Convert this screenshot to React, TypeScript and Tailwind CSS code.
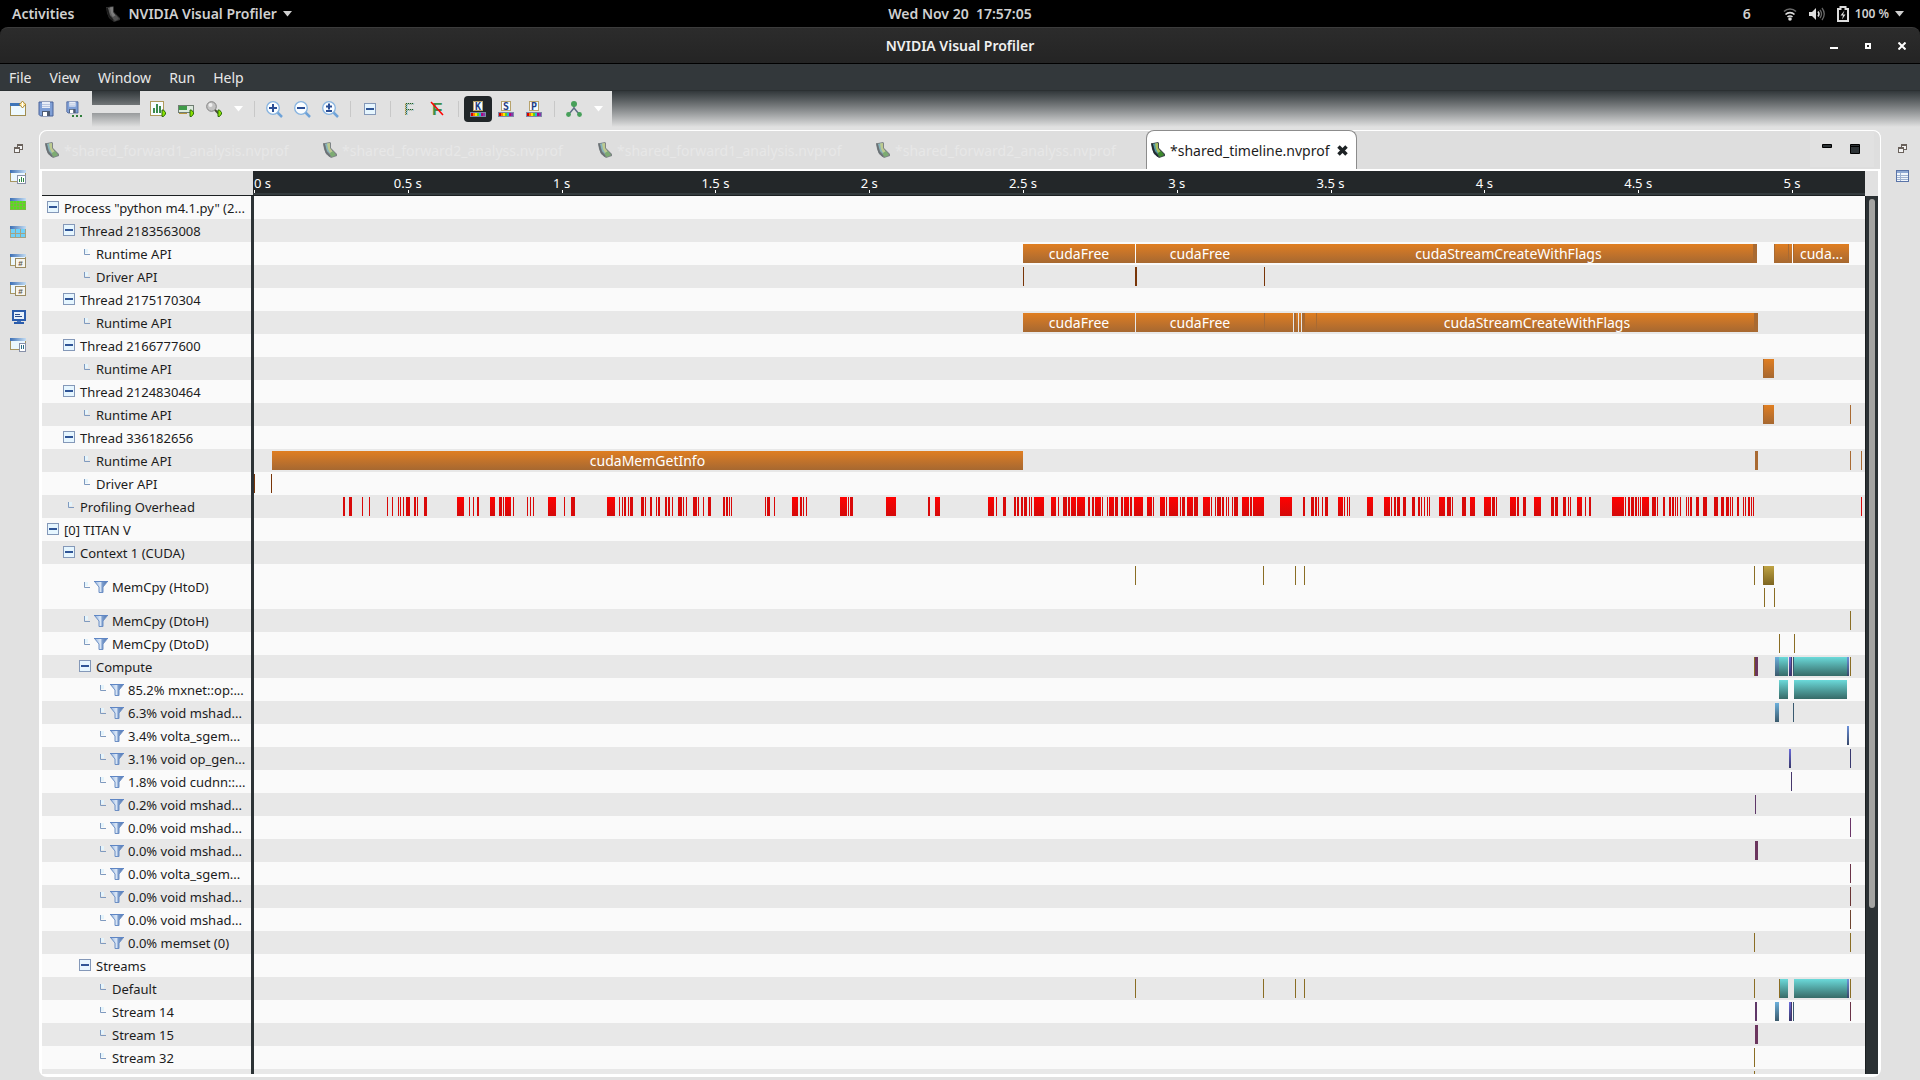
import React from "react";

type Kind =
  | "orange" | "brown" | "rust" | "red" | "redDark" | "olive" | "oliveLine" | "teal" | "sky" | "skyLine"
  | "blue" | "indigo" | "indigoLine" | "violetLine" | "purple" | "purpleLine" | "magentaLine" | "wineLine"
  | "maroonLine" | "sienna";

const FILL: Record<Kind, string> = {
  orange: "bg-linear-to-b from-[#e07e20] to-[#a66830]",
  brown: "bg-[#a96a32]",
  rust: "bg-[#783508]",
  red: "bg-linear-to-b from-[#ff0000] to-[#d40a0a]",
  redDark: "bg-[#d90909]",
  olive: "bg-linear-to-b from-[#bfa343] to-[#7d6520]",
  oliveLine: "bg-[#8a6d24]",
  teal: "bg-linear-to-b from-[#6bdada] to-[#376b68]",
  sky: "bg-linear-to-b from-[#6cb0dc] to-[#3b5a6c]",
  skyLine: "bg-[#3a5a70]",
  blue: "bg-linear-to-b from-[#6c92dc] to-[#37486b]",
  indigo: "bg-linear-to-b from-[#6c6cdc] to-[#37376b]",
  indigoLine: "bg-[#38386e]",
  violetLine: "bg-[#46386c]",
  purple: "bg-[#6b355e]",
  purpleLine: "bg-[#5f3768]",
  magentaLine: "bg-[#6b3568]",
  wineLine: "bg-[#6b3448]",
  maroonLine: "bg-[#6b3535]",
  sienna: "bg-[#6e4530]",
};

/* [start, width, fill, caption] in timeline units */
type Bar = [number, number, Kind, string?];

const SPAN = 1611;
const pct = (n: number) => `${(n / SPAN) * 100}%`;

const OVERHEAD: [number, number][] = [
  [89,2],[95,3],[108,1],[115,1],[133,1],[138,1],[144,1],[146,1],[149,1],[152,4],[160,2],[163,1],[170,3],[203,7],
  [215,1],[219,1],[223,2],[236,5],[245,3],[249,1],[251,6],[259,1],[273,1],[276,1],[279,1],[294,8],[310,1],[317,4],
  [353,8],[365,1],[368,1],[370,2],[374,1],[376,3],[387,3],[391,1],[396,2],[402,1],[404,2],[411,2],[414,2],[418,1],
  [424,4],[429,1],[432,1],[439,4],[444,1],[449,1],[454,3],[469,2],[472,2],[475,1],[477,1],[511,1],[513,3],[520,1],
  [538,6],[546,2],[549,1],[552,1],[586,7],[594,1],[596,3],[632,10],[674,2],[681,5],[734,6],[742,1],[749,3],[760,2],
  [763,2],[767,2],[770,3],[775,1],[777,1],[780,10],[797,5],[804,1],[809,4],[814,2],[817,5],[823,8],[834,2],[838,2],
  [841,6],[848,1],[853,1],[855,5],[861,3],[867,2],[870,5],[876,2],[880,9],[893,5],[899,1],[906,5],[912,1],[915,9],
  [926,1],[928,3],[933,6],[940,4],[949,7],[957,1],[961,1],[963,4],[968,2],[972,1],[974,1],[978,1],[980,4],[988,7],
  [996,2],[999,11],[1026,12],[1049,2],[1057,3],[1061,2],[1064,1],[1068,1],[1071,3],[1084,5],[1090,1],[1093,1],
  [1095,1],[1113,6],[1130,6],[1137,1],[1140,2],[1143,3],[1149,3],[1158,3],[1164,2],[1167,1],[1170,1],[1173,1],
  [1175,1],[1185,6],[1193,4],[1198,1],[1208,4],[1216,5],[1230,7],[1238,3],[1242,1],[1256,6],[1263,2],[1269,3],
  [1280,7],[1297,3],[1301,3],[1309,3],[1314,1],[1316,1],[1323,5],[1331,1],[1335,2],[1358,12],[1371,1],[1374,2],
  [1377,3],[1381,2],[1384,1],[1386,1],[1388,7],[1398,4],[1403,1],[1409,2],[1415,2],[1418,2],[1421,1],[1423,1],
  [1426,1],[1432,1],[1434,1],[1436,2],[1442,3],[1449,4],[1460,4],[1467,3],[1472,3],[1476,1],[1478,1],[1483,2],
  [1489,1],[1491,1],[1494,2],[1497,1],[1499,1],[1607,1],
];

const OVERHEAD_BARS: Bar[] = OVERHEAD.map(([s, w]) => [s, w, w > 4 ? "red" : "redDark"]);

type Row = { label: string; level: number; icon: "box" | "leaf" | "filter"; bars?: Bar[]; second?: Bar[] };

const ROWS: Row[] = [
  { label: 'Process "python m4.1.py" (2...', level: 0, icon: "box" },
  { label: "Thread 2183563008", level: 1, icon: "box" },
  { label: "Runtime API", level: 2, icon: "leaf", bars: [
    [769,112,"orange","cudaFree"],[882,128,"orange","cudaFree"],[1010,489,"orange","cudaStreamCreateWithFlags"],
    [1499,4,"brown"],[1520,1,"brown"],[1521,17,"orange"],[1534,1,"brown"],[1539,1,"brown"],[1540,55,"orange","cuda..."]] },
  { label: "Driver API", level: 2, icon: "leaf", bars: [[769,1,"rust"],[881,2,"rust"],[1010,1,"rust"]] },
  { label: "Thread 2175170304", level: 1, icon: "box" },
  { label: "Runtime API", level: 2, icon: "leaf", bars: [
    [769,112,"orange","cudaFree"],[882,128,"orange","cudaFree"],[1010,29,"orange"],[1010,1,"brown"],
    [1040,4,"orange"],[1040,2,"brown"],[1045,2,"orange"],[1048,14,"orange"],[1048,3,"brown"],
    [1062,1,"brown"],[1063,440,"orange","cudaStreamCreateWithFlags"],[1500,4,"brown"]] },
  { label: "Thread 2166777600", level: 1, icon: "box" },
  { label: "Runtime API", level: 2, icon: "leaf", bars: [[1509,11,"orange"],[1509,1,"brown"]] },
  { label: "Thread 2124830464", level: 1, icon: "box" },
  { label: "Runtime API", level: 2, icon: "leaf", bars: [[1509,11,"orange"],[1509,1,"brown"],[1596,1,"brown"]] },
  { label: "Thread 336182656", level: 1, icon: "box" },
  { label: "Runtime API", level: 2, icon: "leaf", bars: [
    [18,751,"orange","cudaMemGetInfo"],[1501,3,"brown"],[1596,1,"brown"],[1607,1,"brown"]] },
  { label: "Driver API", level: 2, icon: "leaf", bars: [[0,1,"rust"],[17,1,"rust"]] },
  { label: "Profiling Overhead", level: 1, icon: "leaf", bars: OVERHEAD_BARS },
  { label: "[0] TITAN V", level: 0, icon: "box" },
  { label: "Context 1 (CUDA)", level: 1, icon: "box" },
  { label: "MemCpy (HtoD)", level: 2, icon: "filter",
    bars: [[881,1,"oliveLine"],[1009,1,"oliveLine"],[1041,1,"oliveLine"],[1050,1,"oliveLine"],[1500,1,"oliveLine"],[1509,11,"olive"],[1509,1,"oliveLine"]],
    second: [[1510,1,"oliveLine"],[1520,1,"oliveLine"]] },
  { label: "MemCpy (DtoH)", level: 2, icon: "filter", bars: [[1596,1,"oliveLine"]] },
  { label: "MemCpy (DtoD)", level: 2, icon: "filter", bars: [[1525,1,"oliveLine"],[1540,1,"oliveLine"]] },
  { label: "Compute", level: 2, icon: "box", bars: [
    [1500,1,"oliveLine"],[1501,3,"purple"],[1521,4,"sky"],[1525,9,"teal"],[1535,2,"indigo"],[1537,1,"violetLine"],
    [1539,1,"skyLine"],[1540,53,"teal"],[1593,2,"blue"],[1596,1,"oliveLine"]] },
  { label: "85.2% mxnet::op:...", level: 3, icon: "filter", bars: [[1525,9,"teal"],[1540,53,"teal"]] },
  { label: "6.3% void mshad...", level: 3, icon: "filter", bars: [[1521,4,"sky"],[1539,1,"skyLine"]] },
  { label: "3.4% volta_sgem...", level: 3, icon: "filter", bars: [[1593,2,"blue"]] },
  { label: "3.1% void op_gen...", level: 3, icon: "filter", bars: [[1535,2,"indigo"],[1596,1,"indigoLine"]] },
  { label: "1.8% void cudnn::...", level: 3, icon: "filter", bars: [[1537,1,"violetLine"]] },
  { label: "0.2% void mshad...", level: 3, icon: "filter", bars: [[1501,1,"purpleLine"]] },
  { label: "0.0% void mshad...", level: 3, icon: "filter", bars: [[1596,1,"magentaLine"]] },
  { label: "0.0% void mshad...", level: 3, icon: "filter", bars: [[1501,3,"purple"]] },
  { label: "0.0% volta_sgem...", level: 3, icon: "filter", bars: [[1596,1,"wineLine"]] },
  { label: "0.0% void mshad...", level: 3, icon: "filter", bars: [[1596,1,"maroonLine"]] },
  { label: "0.0% void mshad...", level: 3, icon: "filter", bars: [[1596,1,"sienna"]] },
  { label: "0.0% memset (0)", level: 3, icon: "filter", bars: [[1500,1,"oliveLine"],[1596,1,"oliveLine"]] },
  { label: "Streams", level: 2, icon: "box" },
  { label: "Default", level: 3, icon: "leaf", bars: [
    [881,1,"oliveLine"],[1009,1,"oliveLine"],[1041,1,"oliveLine"],[1050,1,"oliveLine"],[1500,1,"oliveLine"],
    [1525,1,"oliveLine"],[1526,8,"teal"],[1540,53,"teal"],[1593,2,"blue"],[1596,1,"oliveLine"]] },
  { label: "Stream 14", level: 3, icon: "leaf", bars: [
    [1501,2,"purpleLine"],[1521,4,"sky"],[1535,2,"indigo"],[1537,1,"violetLine"],[1539,1,"skyLine"],[1596,1,"wineLine"]] },
  { label: "Stream 15", level: 3, icon: "leaf", bars: [[1501,3,"purple"]] },
  { label: "Stream 32", level: 3, icon: "leaf", bars: [[1500,1,"oliveLine"]] },
  { label: "", level: 3, icon: "leaf", bars: [[1500,1,"oliveLine"]] },
];

const TICKS = ["0 s", "0.5 s", "1 s", "1.5 s", "2 s", "2.5 s", "3 s", "3.5 s", "4 s", "4.5 s", "5 s"];

const INDENT = ["pl-[5px]", "pl-[21px]", "pl-[37px]", "pl-[53px]"];

function Svg({ w = 16, h = 16, children }: { w?: number; h?: number; children: React.ReactNode }) {
  return (
    <svg width={w} height={h} viewBox={`0 0 ${w} ${h}`} className="block shrink-0" aria-hidden="true">
      {children}
    </svg>
  );
}

const BoxIcon = () => (
  <Svg w={12} h={12}>
    <rect x=".5" y=".5" width="11" height="11" fill="#e6f6ff" stroke="#8498b8" />
    <rect x="2" y="5" width="8" height="2" fill="#2f5597" />
  </Svg>
);

const LeafIcon = () => (
  <Svg w={6} h={6}>
    <path d="M1 0h3v4H1z" fill="#e4f4fc" />
    <path d="M.5 0v5.5H6" fill="none" stroke="#7f9abf" />
  </Svg>
);

const FilterIcon = () => (
  <Svg w={14} h={12}>
    <defs>
      <linearGradient id="fun" x1="0" x2="1">
        <stop offset="0" stopColor="#8fb0dc" />
        <stop offset=".45" stopColor="#dfeaf8" />
        <stop offset=".6" stopColor="#7c9dcd" />
        <stop offset="1" stopColor="#4e73ae" />
      </linearGradient>
    </defs>
    <path d="M.5 .5h13L9 6v5.5H5V6z" fill="url(#fun)" stroke="#6d8fc4" />
    <path d="M0 .5h14" stroke="#5f86c4" />
  </Svg>
);

const Card = () => (
  <Svg w={14} h={16}>
    <path d="M0 1l2 0 5-1 1 1v5l6 6v2l-6 2-5-4-2-5z" fill="#3f4a4c" />
    <path d="M2 2l4-1v5l5 5-3 2-4-4z" fill="#4f9aa5" />
    <path d="M4 1.500l3-.5v5l3 4-3 1-2-4z" fill="#a8bd5c" />
    <path d="M7 11l3-2 3 4-4 2-2-2z" fill="#3d8a2c" />
    <path d="M1 2l2 8 4 4.500" fill="none" stroke="#1d2931" strokeWidth="1.500" />
  </Svg>
);

const Caret = ({ color }: { color: string }) => (
  <Svg w={9} h={6}>
    <path d="M0 0h9L4.500 5.500z" fill={color} />
  </Svg>
);

const NewWindow = () => (
  <Svg>
    <rect x=".5" y="3.500" width="15" height="11" fill="#eef9ff" stroke="#a08c50" />
    <rect x="0" y="2" width="10" height="3" fill="#3f75b8" />
    <path d="M12.500 0l1.500 2 2 1.500-2 1.500-1.500 2L11 5 9 3.500 11 2z" fill="#ffe9a6" stroke="#a27a1c" strokeWidth=".8" />
    <rect x="12" y="1" width="1" height="5" fill="#fff" />
  </Svg>
);

const Floppy = () => (
  <>
    <path d="M1 1h14v14H2.500L1 13.500z" fill="#7f9fd6" stroke="#4a6299" />
    <rect x="4" y="1" width="8" height="6" fill="#e9eef8" />
    <path d="M4 3.500h8M4 5.500h8" stroke="#b9c6e0" />
    <rect x="4" y="10" width="8" height="5" fill="#4c5a72" />
    <rect x="5" y="11" width="4" height="4" fill="#fff" />
  </>
);
const Save = () => <Svg><Floppy /></Svg>;
const SaveAs = () => (
  <Svg>
    <g transform="scale(.8)"><Floppy /></g>
    <path d="M6 14h2v2H6zM10 14h2v2h-2zM14 14h2v2h-2z" fill="#2f7d3a" />
  </Svg>
);

const Play = () => <path d="M12 9h1.500l2 2.500v1.500L13.500 15.500H12z" fill="#8ae000" stroke="#2c6b0e" />;

const ChartRun = () => (
  <Svg>
    <rect x=".5" y=".5" width="13" height="14" fill="#f7fcff" stroke="#b09a5c" />
    <path d="M3 7h2v5H3zM6 3h2v9H6zM9 5h2v7H9z" fill="#3a8a4d" />
    <Play />
  </Svg>
);
const CardRun = () => (
  <Svg>
    <rect x=".5" y="4.500" width="15" height="7" fill="#dceade" stroke="#6f7d72" />
    <rect x="1" y="5" width="8" height="4" fill="#3f9b48" />
    <path d="M1 12.500h8" stroke="#b6953c" strokeWidth="1" />
    <Play />
  </Svg>
);
const LensRun = () => (
  <Svg>
    <circle cx="5.500" cy="5.500" r="4.800" fill="#c3c3c3" stroke="#828282" />
    <circle cx="4.500" cy="4" r="2" fill="#ededed" />
    <path d="M9 9l4 4" stroke="#4a4a3a" strokeWidth="2" />
    <Play />
  </Svg>
);

const Zoom = ({ d }: { d: string }) => (
  <Svg w={17} h={17}>
    <path d="M11 11l5 5" stroke="#6fa3d8" strokeWidth="2.500" />
    <circle cx="7" cy="7" r="6.300" fill="#fafdff" stroke="#86b3e0" strokeWidth="1.300" />
    <path d={d} stroke="#2a4e96" strokeWidth="2" fill="none" />
  </Svg>
);

const FLetter = ({ strike }: { strike?: boolean }) => (
  <Svg>
    <defs>
      <pattern id="dots" width="2" height="2" patternUnits="userSpaceOnUse">
        <rect width="2" height="2" fill="#a9bfaa" />
        <rect width="1" height="1" fill="#1f5c28" />
        <rect x="1" y="1" width="1" height="1" fill="#1f5c28" />
      </pattern>
    </defs>
    <text x="2" y="14" fontFamily="Liberation Sans" fontSize="17" fontWeight={strike ? 700 : 400} fill={strike ? "#3f8f46" : "url(#dots)"}>
      F
    </text>
    {strike && <path d="M1 1l12 13" stroke="#ff0000" strokeWidth="1.500" />}
  </Svg>
);

const Palette = ({ letter }: { letter: string }) => (
  <Svg>
    <rect x="3.500" y=".5" width="9" height="9" fill="#f6fbff" stroke="#b7a36c" />
    <text x="8" y="9" textAnchor="middle" fontFamily="DejaVu Sans Mono" fontWeight="700" fontSize="10" fill="#1f3f86">
      {letter}
    </text>
    <rect x="0" y="11" width="16" height="5" fill="#7d88a8" />
    <rect x="1" y="12" width="2" height="3" fill="#d40000" />
    <rect x="3" y="12" width="2" height="3" fill="#ff7a00" />
    <rect x="5" y="12" width="2" height="3" fill="#ffe600" />
    <rect x="7" y="12" width="2" height="3" fill="#62d21a" />
    <rect x="9" y="12" width="2" height="3" fill="#22b8d8" />
    <rect x="11" y="12" width="2" height="3" fill="#b4007c" />
    <rect x="13" y="12" width="2" height="3" fill="#8438a8" />
  </Svg>
);

const Tree = () => (
  <Svg>
    <path d="M8 4v3L3 13M8 7l5 6" fill="none" stroke="#5f6f86" strokeWidth="1.500" />
    <circle cx="8" cy="3" r="3" fill="#47a05a" />
    <circle cx="2.500" cy="13.500" r="2.400" fill="#47a05a" />
    <circle cx="13.500" cy="13.500" r="2.400" fill="#47a05a" />
  </Svg>
);

const Restore = () => (
  <Svg w={9} h={9}>
    <rect x="3" y="0" width="6" height="6" fill="#6a625c" />
    <rect x="4" y="2" width="4" height="3" fill="#f4f4f4" />
    <rect x="0" y="3" width="6" height="6" fill="#6a625c" />
    <rect x="1" y="5" width="4" height="3" fill="#f4f4f4" />
  </Svg>
);

const ViewFrame = ({ children }: { children?: React.ReactNode }) => (
  <Svg w={16} h={14}>
    <defs>
      <linearGradient id="cap" x1="0" x2="1">
        <stop offset="0" stopColor="#3d6fb4" />
        <stop offset="1" stopColor="#c3dcf2" />
      </linearGradient>
    </defs>
    <rect x=".5" y=".5" width="15" height="11" fill="#ebf7fe" stroke="#a79663" />
    <rect x="0" y="0" width="16" height="3" fill="url(#cap)" />
    {children}
  </Svg>
);
const ViewChart = () => (
  <ViewFrame>
    <rect x="7.500" y="5.500" width="8" height="8" fill="#fff" stroke="#8790a8" />
    <path d="M9 9h1v3H9zM11 7h1v5h-1zM13 8h1v4h-1z" fill="#2e8742" />
  </ViewFrame>
);
const ViewGreen = () => (
  <ViewFrame>
    <rect x="0" y="3" width="16" height="9" fill="#55e01a" />
    <path d="M0 5.500h16M0 8.500h16M0 11.500h16M3.500 3v9M6.500 3v9M9.500 3v9M12.500 3v9M.5 3v9M15.500 3v9" stroke="#8fa35c" strokeOpacity=".6" />
  </ViewFrame>
);
const ViewBlue = () => (
  <ViewFrame>
    <rect x="0" y="3" width="16" height="9" fill="#6fd0f8" />
    <path d="M0 7.500h16M5.500 3v9M10.500 3v9M.5 3v9M15.500 3v9M0 11.500h16" stroke="#a5a283" />
  </ViewFrame>
);
const ViewHash = () => (
  <ViewFrame>
    <rect x="5.500" y="4.500" width="10" height="9" fill="#f7f4ec" stroke="#9a8b62" />
    <text x="10.500" y="12" textAnchor="middle" fontFamily="Liberation Sans" fontSize="8" fontWeight="700" fill="#5b5346">#</text>
  </ViewFrame>
);
const Monitor = () => (
  <Svg w={16} h={14}>
    <rect x="3" y="1" width="12" height="9" fill="#e8f2fc" stroke="#2b5cab" strokeWidth="2" />
    <path d="M5 4.500h5M5 6.500h7" stroke="#2b4c8c" />
    <rect x="7" y="11" width="4" height="1" fill="#4a78c0" />
    <rect x="4" y="12" width="10" height="2" fill="#2b5cab" />
  </Svg>
);
const ViewPause = () => (
  <ViewFrame>
    <rect x="9.500" y="5.500" width="6" height="8" fill="#fff" stroke="#8790a8" />
    <path d="M11 7h1v4h-1zM13 7h1v4h-1z" fill="#2e6f87" />
  </ViewFrame>
);
const TableIcon = () => (
  <Svg w={13} h={12}>
    <rect x=".5" y=".5" width="12" height="11" fill="#f2f7fc" stroke="#5a74a8" />
    <rect x="1" y="1" width="11" height="2" fill="#8fa9d2" />
    <path d="M1 5.500h11M1 7.500h11M1 9.500h11M4.500 3v8" stroke="#9fb2d0" />
  </Svg>
);

function Tool({ label, active, children }: { label: string; active?: boolean; children: React.ReactNode }) {
  return (
    <button
      aria-label={label}
      className={`flex h-[26px] w-7 items-center justify-center rounded ${active ? "bg-[#212629]" : ""}`}
    >
      {children}
    </button>
  );
}
function ArrowTool({ label }: { label: string }) {
  return (
    <button aria-label={label} className="flex h-[26px] w-5 items-center justify-center">
      <Caret color="#ffffff" />
    </button>
  );
}
const Sep = () => (
  <div className="flex w-3 justify-center">
    <div className="h-4 w-px bg-[#c8c8c8]" />
  </div>
);

function Track({ bars }: { bars: Bar[] }) {
  return (
    <div className="relative h-[19px]">
      {bars.map(([start, width, kind, caption], i) => (
        <div
          key={i}
          className={`absolute inset-y-0 flex items-center justify-center overflow-hidden text-[14px] leading-[19px] whitespace-nowrap text-white ${FILL[kind]}`}
          style={{ left: pct(start), width: pct(width) }}
        >
          {caption}
        </div>
      ))}
    </div>
  );
}

function TimelineRow({ row, odd }: { row: Row; odd: boolean }) {
  const bg = odd ? "bg-[#e8e8e8]" : "bg-[#fafafa]";
  return (
    <div className={`flex shrink-0 ${row.second ? "h-[45px]" : "h-[23px]"} ${bg}`}>
      <div className={`flex w-[212px] shrink-0 items-center border-r-3 border-[#2d3336] ${INDENT[row.level]}`}>
        {row.icon === "box" ? (
          <button aria-label={`Collapse ${row.label}`} className="mr-[5px] mb-px shrink-0">
            <BoxIcon />
          </button>
        ) : (
          <span className={`mb-1 ml-[5px] ${row.icon === "filter" ? "mr-1" : "mr-[6px]"}`}>
            <LeafIcon />
          </span>
        )}
        {row.icon === "filter" && (
          <span className="mr-1">
            <FilterIcon />
          </span>
        )}
        <span className="text-[13px] leading-[22px] whitespace-nowrap text-[#1c1c1c]">{row.label}</span>
      </div>
      <div className="flex-1 pt-[2px]">
        {row.bars && <Track bars={row.bars} />}
        {row.second && (
          <div className="pt-[3px]">
            <Track bars={row.second} />
          </div>
        )}
      </div>
    </div>
  );
}

function Tab({ label, width }: { label: string; width: string }) {
  return (
    <button role="tab" aria-selected="false" className={`flex h-full items-center gap-[5px] pl-[5px] ${width}`}>
      <span className="opacity-60">
        <Card />
      </span>
      <span className="text-[14px] whitespace-nowrap text-[#e7e7e7]">{label}</span>
    </button>
  );
}

export default function App() {
  return (
    <div className="flex h-screen flex-col overflow-hidden bg-[#e1e1e1] font-['Noto_Sans',sans-serif]">
      <header className="grid h-[27px] shrink-0 grid-cols-3 items-center bg-black text-[14px] font-semibold text-[#d0d0d0]">
        <div className="flex items-center pl-3">
          <button className="mr-8">Activities</button>
          <button className="flex items-center">
            <span className="mr-2 opacity-70 grayscale">
              <Card />
            </span>
            NVIDIA Visual Profiler
            <span className="ml-[6px]">
              <Caret color="#d0d0d0" />
            </span>
          </button>
        </div>
        <div className="text-center whitespace-pre">Wed Nov 20  17:57:05</div>
        <div className="flex items-center justify-end pr-4">
          <span className="mr-8">6</span>
          <span className="mr-3">
            <Svg w={14} h={14}>
              <path d="M1 4.500a8.500 8.500 0 0112 0" fill="none" stroke="#6a6a6a" strokeWidth="1.600" />
              <path d="M2.500 7.500a6.300 6.300 0 019 0M4.500 10a3.500 3.500 0 015 0" fill="none" stroke="#dcdcdc" strokeWidth="1.600" />
              <circle cx="7" cy="12" r="1.800" fill="#dcdcdc" />
            </Svg>
          </span>
          <span className="mr-3">
            <Svg w={16} h={14}>
              <path d="M0 5h3l4-4v12L3 9H0z" fill="#dcdcdc" />
              <path d="M9 4.500q2 2.500 0 5" fill="none" stroke="#dcdcdc" strokeWidth="1.500" />
              <path d="M11 3q3 4 0 8M13 1q4.500 6 0 12" fill="none" stroke="#666" strokeWidth="1.300" />
            </Svg>
          </span>
          <span className="mr-[6px]">
            <Svg w={12} h={16}>
              <path d="M1 3h2.500V1h5v2H11v12H1z" fill="none" stroke="#dcdcdc" strokeWidth="2" />
              <path d="M7.500 4.500L3.500 9.500H6l-1 4 3.500-5H6z" fill="#dcdcdc" />
            </Svg>
          </span>
          <span className="mr-[6px] text-[12px]">100 %</span>
          <Caret color="#d0d0d0" />
        </div>
      </header>

      <div className="shrink-0 bg-black">
        <div className="grid h-[37px] grid-cols-3 items-center rounded-t-lg border-t border-b border-t-[#3c3c3c] border-b-black bg-linear-to-b from-[#2c2c2c] to-[#242424]">
          <div />
          <h1 className="text-center text-[14px] font-semibold text-[#f0f0f0]">NVIDIA Visual Profiler</h1>
          <div className="flex items-center justify-end gap-[26px] pr-[14px]">
            <button aria-label="Minimize">
              <Svg w={8} h={8}><path d="M0 5h8v2H0z" fill="#fff" /></Svg>
            </button>
            <button aria-label="Maximize">
              <Svg w={8} h={8}><path d="M2 2h4v4H2z" fill="none" stroke="#fff" strokeWidth="2" /></Svg>
            </button>
            <button aria-label="Close">
              <Svg w={8} h={8}><path d="M.5 .5l7 7M7.500 .5l-7 7" stroke="#fff" strokeWidth="2" /></Svg>
            </button>
          </div>
        </div>
      </div>

      <nav className="flex h-[27px] shrink-0 items-center gap-[18px] border-b border-[#2b3032] bg-[#33383b] pl-[9px] text-[14px] text-[#e8e8e8]">
        <button>File</button>
        <button>View</button>
        <button>Window</button>
        <button>Run</button>
        <button>Help</button>
      </nav>

      <div className="flex h-9 shrink-0 bg-linear-to-b from-[#32383b] to-[#e1e1e1]">
        <div className="flex items-center bg-[#e1e1e1] px-1">
          <Tool label="New"><NewWindow /></Tool>
          <Tool label="Save"><Save /></Tool>
          <Tool label="Save as"><SaveAs /></Tool>
        </div>
        <div className="flex w-12 flex-col justify-center">
          <div className="h-2 bg-[#e1e1e1]" />
        </div>
        <div className="flex items-center bg-[#e1e1e1] px-1">
          <Tool label="Run analysis"><ChartRun /></Tool>
          <Tool label="Run device"><CardRun /></Tool>
          <Tool label="Examine"><LensRun /></Tool>
          <ArrowTool label="More run options" />
          <Sep />
          <Tool label="Zoom in"><Zoom d="M3 7h8M7 3v8" /></Tool>
          <Tool label="Zoom out"><Zoom d="M3 7h8" /></Tool>
          <Tool label="Zoom to fit"><Zoom d="M4 5.500h6M7 2.500v6M4 10h6" /></Tool>
          <Sep />
          <Tool label="Collapse"><BoxIcon /></Tool>
          <Sep />
          <Tool label="Focus"><FLetter /></Tool>
          <Tool label="Clear focus"><FLetter strike /></Tool>
          <Sep />
          <Tool label="Kernel colors" active><Palette letter="K" /></Tool>
          <Tool label="Stream colors"><Palette letter="S" /></Tool>
          <Tool label="Process colors"><Palette letter="P" /></Tool>
          <Sep />
          <Tool label="Dependencies"><Tree /></Tool>
          <ArrowTool label="More dependency options" />
        </div>
      </div>

      <div className="flex min-h-0 flex-1 pt-[3px] pb-[3px]">
        <aside className="flex w-[39px] shrink-0 flex-col items-center gap-[14px] pt-[14px] pr-[3px]">
          <button aria-label="Restore" className="mb-[3px]"><Restore /></button>
          <button aria-label="Analysis"><ViewChart /></button>
          <button aria-label="GPU details"><ViewGreen /></button>
          <button aria-label="CPU details"><ViewBlue /></button>
          <button aria-label="Counters"><ViewHash /></button>
          <button aria-label="Metrics"><ViewHash /></button>
          <button aria-label="Console"><Monitor /></button>
          <button aria-label="Settings"><ViewPause /></button>
        </aside>

        <main className="flex min-w-0 flex-1 flex-col overflow-hidden rounded-lg bg-white">
          <div role="tablist" className="flex h-[39px] shrink-0 rounded-t-lg border border-b-0 border-white bg-[#dedede]">
            <Tab label="*shared_forward1_analysis.nvprof" width="w-[278px]" />
            <Tab label="*shared_forward2_analyss.nvprof" width="w-[275px]" />
            <Tab label="*shared_forward1_analysis.nvprof" width="w-[278px]" />
            <Tab label="*shared_forward2_analyss.nvprof" width="w-[275px]" />
            <div role="tab" aria-selected="true" className="-mt-px flex w-[211px] items-center rounded-t-lg border border-b-0 border-[#8c8c8c] bg-white pl-1">
              <Card />
              <span className="ml-[5px] text-[14px] whitespace-nowrap text-[#1c1c1c]">*shared_timeline.nvprof</span>
              <button aria-label="Close tab" className="ml-[7px]">
                <Svg w={11} h={11}>
                  <path d="M1.500 1.500l8 8M9.500 1.500l-8 8" stroke="#1d2224" strokeWidth="3.500" />
                </Svg>
              </button>
            </div>
            <div className="mb-[2px] ml-auto mr-[6px] flex w-16 items-center gap-[18px] bg-[#e1e1e1] pl-3">
              <button aria-label="Minimize panel">
                <Svg w={10} h={10}><path d="M.5 .5h9v3h-9z" fill="#2d3336" stroke="#000" /></Svg>
              </button>
              <button aria-label="Maximize panel">
                <Svg w={10} h={10}><path d="M.5 .5h9v9h-9z" fill="#2d3336" stroke="#000" /><path d="M0 2.500h10" stroke="#000" /></Svg>
              </button>
            </div>
          </div>

          <div className="mx-[3px] mt-[2px] mb-[3px] flex min-h-0 flex-1 overflow-hidden">
            <div className="flex min-w-0 flex-1 flex-col">
              <div className="flex h-[25px] shrink-0 border-b border-[#1c2022]">
                <div className="w-[211px] shrink-0 bg-[#e1e1e1]" />
                <div className="flex-1 border-b-2 border-[#343b3e] bg-[#232729] pl-px text-[13px] leading-[24px] text-white">
                  <div className="relative h-[22px]">
                    {TICKS.map((t, i) => (
                      <React.Fragment key={t}>
                        <span
                          className={`absolute top-0 whitespace-nowrap ${i === 0 ? "" : "-translate-x-1/2"}`}
                          style={{ left: pct(i * 153.8) }}
                        >
                          {t}
                        </span>
                        <span className="absolute bottom-0 h-[3px] w-px bg-white" style={{ left: pct(i * 153.8) }} />
                      </React.Fragment>
                    ))}
                  </div>
                </div>
              </div>
              <div className="flex min-h-0 flex-1 flex-col overflow-hidden">
                {ROWS.map((row, i) => (
                  <TimelineRow key={i} row={row} odd={i % 2 === 1} />
                ))}
              </div>
            </div>
            <div className="flex w-[13px] shrink-0 flex-col">
              <div className="h-[25px] bg-[#e1e1e1]" />
              <div className="flex-1 border-l border-[#1a1e20] bg-[#2b3134] px-[3px] pt-[3px]">
                <div className="h-[81%] w-[6px] rounded-full bg-[#a4a4a2]" />
              </div>
            </div>
          </div>
        </main>

        <aside className="flex w-[39px] shrink-0 flex-col items-center gap-[17px] pt-[14px] pl-[3px]">
          <button aria-label="Restore right panel"><Restore /></button>
          <button aria-label="Properties"><TableIcon /></button>
        </aside>
      </div>
    </div>
  );
}
